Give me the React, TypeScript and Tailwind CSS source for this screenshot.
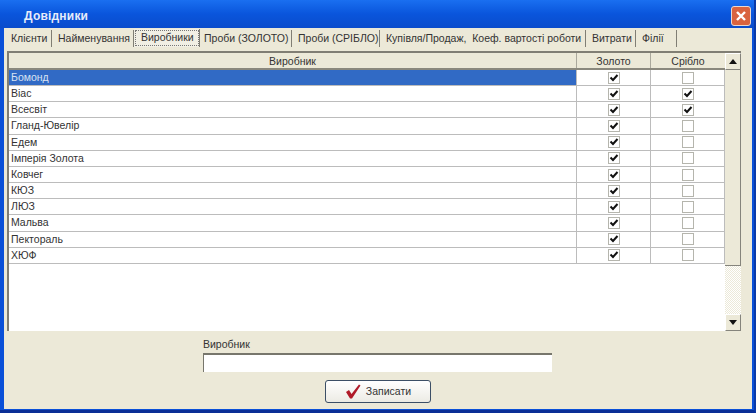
const tabs: [string, string, boolean?][] = [
  ["Клієнти", "w-[44px] pl-[3px]"],
  ["Найменування", "w-[82px] pl-[6px]"],
  ["Виробники", "w-[66px] pl-[7px]", true],
  ["Проби (ЗОЛОТО)", "w-[92px] pl-[4px]"],
  ["Проби (СРІБЛО)", "w-[88px] pl-[6px]"],
  ["Купівля/Продаж,  Коеф. вартості роботи", "w-[206px] pl-[6px]"],
  ["Витрати", "w-[50px] pl-[6px]"],
  ["Філії", "w-[41px] pl-[6px]"],
];

const rows: [string, boolean][] = [
  ["Бомонд", false],
  ["Віас", true],
  ["Всесвіт", true],
  ["Гланд-Ювелір", false],
  ["Едем", false],
  ["Імперія Золота", false],
  ["Ковчег", false],
  ["КЮЗ", false],
  ["ЛЮЗ", false],
  ["Мальва", false],
  ["Пектораль", false],
  ["ХЮФ", false],
];

function Check({ checked }: { checked: boolean }) {
  return (
    <span className="flex h-[12px] w-[12px] items-center justify-center border border-[#b5b5ad] bg-white">
      {checked && (
        <svg width="10" height="10" viewBox="0 0 10 10">
          <path d="M1.5 4.5 L4 7 L8.5 2" fill="none" stroke="#111" strokeWidth="2" />
        </svg>
      )}
    </span>
  );
}

function Arrow({ up }: { up: boolean }) {
  return (
    <span className="flex h-[17px] w-[16px] shrink-0 items-center justify-center border-t border-l border-t-white border-l-white border-r border-b border-r-[#85847c] border-b-[#85847c] bg-[#ece9d8]">
      <svg width="8" height="5" viewBox="0 0 8 5">
        <path d={up ? "M4 0 L8 5 L0 5 Z" : "M0 0 L8 0 L4 5 Z"} fill="#111" />
      </svg>
    </span>
  );
}

export default function App() {
  return (
    <div className="flex h-[413px] w-[756px] flex-col overflow-hidden border-r-2 border-b-[3px] border-r-[#0a3aa8] border-b-[#0a2f96] bg-[#0a50d8] font-['Liberation_Sans',sans-serif] text-[10.5px] text-[#333]">
      <div className="flex h-[28px] shrink-0 items-center justify-between bg-gradient-to-b from-[#1a6ff0] via-[#0a55dc] to-[#0a4ccc] pl-[24px] pr-[3px]">
        <span className="mt-[3px] text-[12px] font-bold tracking-[0.2px] text-[#e6ecfa]">Довідники</span>
        <span className="mt-[3px] flex h-[20px] w-[20px] items-center justify-center rounded-[3px] border border-[#e8d8d0] bg-[#d9633f]">
          <svg width="12" height="12" viewBox="0 0 12 12">
            <path d="M2 2 L10 10 M10 2 L2 10" stroke="#fff" strokeWidth="2.4" />
          </svg>
        </span>
      </div>
      <div className="mb-[1px] ml-[4px] mr-[2px] flex min-h-0 flex-1 flex-col bg-[#ece9d8]">
        <div className="flex h-[23px] shrink-0 items-start pl-[4px] pt-[2px]">
          {tabs.map(([label, w, active]) => (
            <div key={label} className={`flex shrink-0 items-center whitespace-pre border-r ${w} ${active ? "-mt-[1px] h-[18px] border-r-[#807e74] bg-[#f1efe4] pb-[1px] outline-1 -outline-offset-2 outline-dotted outline-[#777]" : "h-[17px] border-r-[#807e74]"}`}>
              {label}
            </div>
          ))}
        </div>
        <div className="ml-[3px] flex h-[280px] w-[734px] shrink-0 border-t-2 border-l-2 border-t-[#807e74] border-l-[#807e74] bg-white">
          <div className="flex w-[716px] flex-col">
            <div className="flex h-[17px] shrink-0 border-b-2 border-b-[#8a887d] bg-[#ece9d8] text-center">
              <div className="w-[568px] border-r border-r-[#aaa89c] pt-[1px] leading-[15px]">Виробник</div>
              <div className="w-[74px] border-r border-r-[#aaa89c] pt-[1px] leading-[15px]">Золото</div>
              <div className="w-[74px] pt-[1px] leading-[15px]">Срібло</div>
            </div>
            {rows.map(([name, silver], i) => (
              <div key={name} className="flex h-[16.17px] shrink-0 border-b border-b-[#bcbcbc]">
                <div className={`w-[568px] border-r border-r-[#bcbcbc] pl-[2px] leading-[15px] ${i === 0 ? "bg-[#316ac5] text-[#d8e2f2]" : ""}`}>{name}</div>
                <div className="flex w-[74px] items-center justify-center border-r border-r-[#bcbcbc]">
                  <Check checked />
                </div>
                <div className="flex w-[74px] items-center justify-center border-r border-r-[#bcbcbc]">
                  <Check checked={silver} />
                </div>
              </div>
            ))}
          </div>
          <div className="flex w-[16px] shrink-0 flex-col">
            <Arrow up />
            <div className="h-[196px] shrink-0 border-r border-b border-r-[#85847c] border-b-[#85847c] bg-[#ece9d8]" />
            <div className="flex-1 bg-[repeating-conic-gradient(#ece9d8_0_25%,#ffffff_0_50%)] bg-[length:2px_2px]" />
            <Arrow up={false} />
          </div>
        </div>
        <div className="ml-[199px] mt-[7px] leading-[13px]">Виробник</div>
        <div className="ml-[199px] mt-[2px] h-[19px] w-[349px] border-t-2 border-l border-t-[#77766c] border-l-[#77766c] bg-white" />
        <button className="ml-[321px] mt-[8px] flex h-[23px] w-[106px] items-center justify-center gap-[5px] rounded-[3px] border border-[#3c4f66] bg-gradient-to-b from-white to-[#ecebe4]">
          <svg width="16" height="15" viewBox="0 0 16 15">
            <path d="M1 8 L4 6 L6.5 10 L14 0.5 L15.5 1.5 L7 14.5 L5 14.5 Z" fill="#b01a28" />
          </svg>
          <span>Записати</span>
        </button>
      </div>
    </div>
  );
}
